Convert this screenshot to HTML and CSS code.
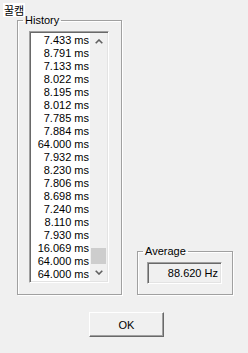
FILE: index.html
```html
<!DOCTYPE html>
<html lang="ko">
<head>
  <meta charset="UTF-8">
  <meta name="viewport" content="width=device-width, initial-scale=1.0">
  <title>꿀캠</title>
  <link rel="stylesheet" href="styles.css">
</head>
<body>
  <div class="caption">꿀캠</div>

  <div class="panels">
    <fieldset class="group">
      <legend>History</legend>
      <div class="group-body history-body">
        <div class="listbox">
          <ul class="items">
            <li>7.433 ms</li>
            <li>8.791 ms</li>
            <li>7.133 ms</li>
            <li>8.022 ms</li>
            <li>8.195 ms</li>
            <li>8.012 ms</li>
            <li>7.785 ms</li>
            <li>7.884 ms</li>
            <li>64.000 ms</li>
            <li>7.932 ms</li>
            <li>8.230 ms</li>
            <li>7.806 ms</li>
            <li>8.698 ms</li>
            <li>7.240 ms</li>
            <li>8.110 ms</li>
            <li>7.930 ms</li>
            <li>16.069 ms</li>
            <li>64.000 ms</li>
            <li>64.000 ms</li>
          </ul>
          <div class="scrollbar">
            <div class="sb-btn">
              <svg width="8" height="5" viewBox="0 0 8 5"><polyline points="0.7,4.3 4,1 7.3,4.3" fill="none" stroke="#606060" stroke-width="1.6"/></svg>
            </div>
            <div class="sb-track">
              <div class="sb-thumb"></div>
            </div>
            <div class="sb-btn">
              <svg width="8" height="5" viewBox="0 0 8 5"><polyline points="0.7,0.7 4,4 7.3,0.7" fill="none" stroke="#606060" stroke-width="1.6"/></svg>
            </div>
          </div>
        </div>
      </div>
    </fieldset>

    <fieldset class="group">
      <legend>Average</legend>
      <div class="group-body average-body">
        <div class="field">88.620 Hz</div>
      </div>
    </fieldset>
  </div>

  <div class="actions">
    <button class="ok">OK</button>
  </div>
</body>
</html>
```

FILE: styles.css
```css
body {
  margin: 0;
  width: 248px;
  height: 353px;
  background: #f0f0f0;
  font-family: "Liberation Sans", Arial, sans-serif;
  font-size: 11px;
  color: #000;
  overflow: hidden;
}
.caption {
  display: inline-block;
  margin: 3px 0 -3px 3px;
  padding: 0 1px;
  background: #ffffff;
  font-family: "Noto Sans CJK KR", sans-serif;
  font-size: 11px;
  line-height: 14px;
  vertical-align: top;
}
.panels {
  display: flex;
  align-items: flex-end;
  gap: 15px;
  padding-left: 17px;
}
.group {
  margin: 0;
  padding: 0;
  min-width: 0;
  border: 1px solid #a0a0a0;
  box-shadow: 1px 1px 0 #ffffff, inset 1px 1px 0 #ffffff;
}
.group legend {
  margin-left: 5px;
  padding: 0 2px;
  line-height: 13px;
}
.history-body {
  padding: 4px 12px 11px 11px;
}
.average-body {
  padding: 4px 10px 10px 9px;
}
.listbox {
  display: flex;
  width: 80px;
  height: 252px;
  box-sizing: border-box;
  border: 1px solid;
  border-color: #a0a0a0 #ffffff #ffffff #a0a0a0;
  box-shadow: inset 1px 1px 0 #696969, inset -1px -1px 0 #e3e3e3;
  padding: 1px;
  background: #ffffff;
}
.items {
  list-style: none;
  margin: 0;
  padding: 1px 1px 0 0;
  flex: 1;
  overflow: hidden;
  text-align: right;
}
.items li {
  line-height: 13px;
  white-space: nowrap;
}
.scrollbar {
  width: 17px;
  display: flex;
  flex-direction: column;
  background: #f0f0f0;
}
.sb-btn {
  height: 17px;
  display: flex;
  align-items: center;
  justify-content: center;
}
.sb-btn svg {
  display: block;
}
.sb-track {
  flex: 1;
  display: flex;
  flex-direction: column;
  justify-content: flex-end;
}
.sb-thumb {
  height: 16px;
  margin: 0 1px;
  background: #cdcdcd;
}
.field {
  width: 75px;
  height: 22px;
  box-sizing: border-box;
  border: 1px solid;
  border-color: #a0a0a0 #ffffff #ffffff #a0a0a0;
  box-shadow: inset 1px 1px 0 #696969, inset -1px -1px 0 #e3e3e3;
  padding: 0 3px 0 0;
  line-height: 20px;
  text-align: right;
  background: #f0f0f0;
}
.actions {
  padding: 17px 0 0 89px;
}
.ok {
  width: 75px;
  height: 25px;
  margin: 0;
  padding: 0;
  font-family: "Liberation Sans", Arial, sans-serif;
  font-size: 11px;
  color: #000;
  background: #f0f0f0;
  border: 1px solid;
  border-color: #ffffff #696969 #696969 #ffffff;
  box-shadow: inset -1px -1px 0 #a0a0a0;
}
```
